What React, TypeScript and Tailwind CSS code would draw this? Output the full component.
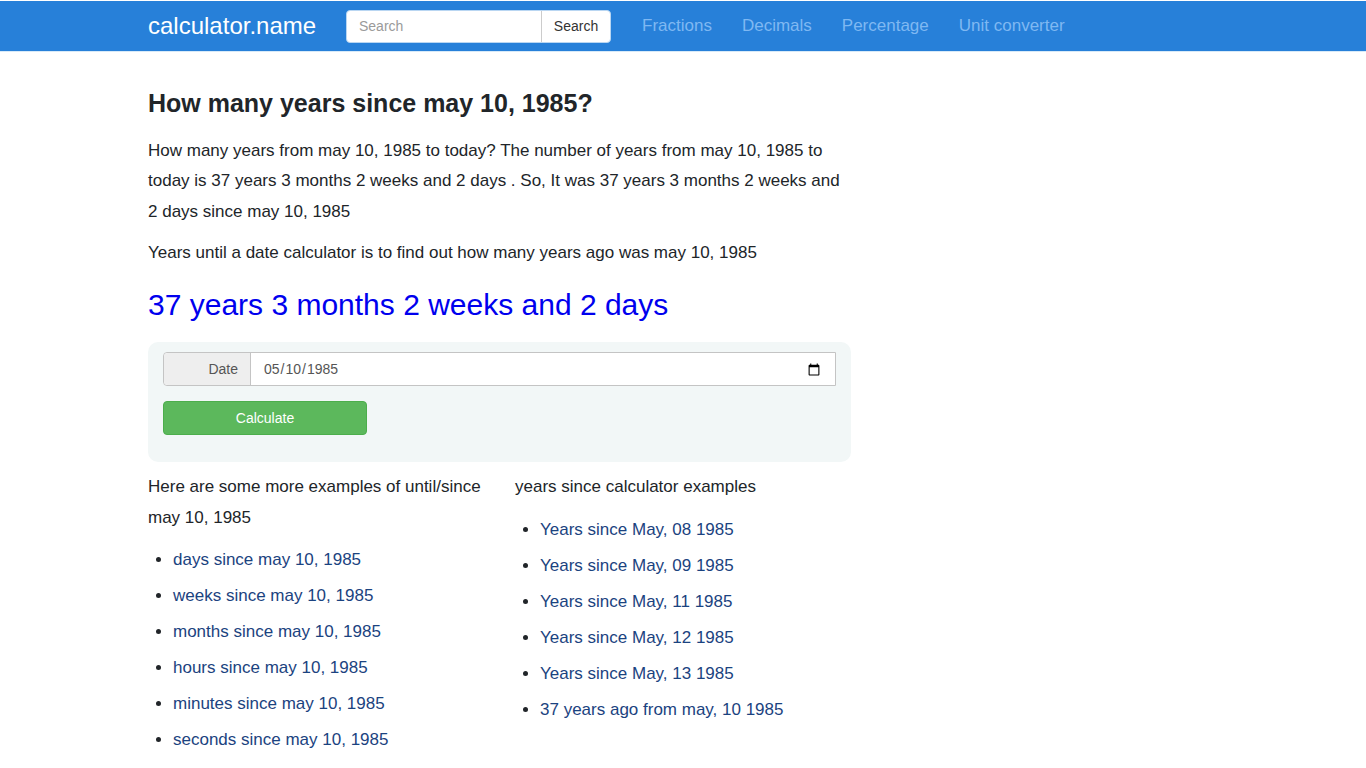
export default function App() {
  const left = ["days since may 10, 1985", "weeks since may 10, 1985", "months since may 10, 1985", "hours since may 10, 1985", "minutes since may 10, 1985", "seconds since may 10, 1985"];
  const right = ["Years since May, 08 1985", "Years since May, 09 1985", "Years since May, 11 1985", "Years since May, 12 1985", "Years since May, 13 1985", "37 years ago from may, 10 1985"];
  const List = ({ items }: { items: string[] }) => (
    <ul className="list-disc pl-[25px] mt-[11.6px]">
      {items.map((t) => (
        <li key={t} className="h-[36px] leading-[30px] marker:text-[#212529]">
          <a href="#" className="text-[#1b4380]">{t}</a>
        </li>
      ))}
    </ul>
  );
  return (
    <div className="font-['Liberation_Sans',Arial,sans-serif] text-[17px] text-[#212529] bg-white h-[768px] overflow-hidden pt-px">
      <nav className="h-[50px] bg-[#2780d9] pl-[148px] flex items-center border-b border-[#d8eaf8] box-content -mb-px">
        <a href="#" className="text-white text-[24px] leading-none w-[198px]">calculator.name</a>
        <div className="flex w-[265px] h-[33px] bg-white rounded-[4px] overflow-hidden border border-[#b9d6f2]">
          <input placeholder="Search" className="w-[194px] h-full pl-[12px] text-[14px] outline-none placeholder:text-[#9a9a9a]" />
          <button className="flex-1 border-l border-[#ccc] text-[14px] text-[#333]">Search</button>
        </div>
        <div className="flex gap-[30px] ml-[31px] text-[#7fb8f2] text-[17px]">
          <a href="#">Fractions</a>
          <a href="#">Decimals</a>
          <a href="#">Percentage</a>
          <a href="#">Unit converter</a>
        </div>
      </nav>
      <main className="ml-[148px] w-[703px]">
        <h1 className="text-[25px] font-bold leading-[30px] mt-[37px]">How many years since may 10, 1985?</h1>
        <p className="leading-[30.6px] mt-[17.6px]">How many years from may 10, 1985 to today? The number of years from may 10, 1985 to today is 37 years 3 months 2 weeks and 2 days . So, It was 37 years 3 months 2 weeks and 2 days since may 10, 1985</p>
        <p className="leading-[30.6px] mt-[10.4px]">Years until a date calculator is to find out how many years ago was may 10, 1985</p>
        <h2 className="text-[30px] leading-[36px] text-[#0000ee] mt-[19px]">37 years 3 months 2 weeks and 2 days</h2>
        <div className="mt-[19px] h-[120px] bg-[#f2f7f7] rounded-[10px] px-[15px] pt-[10px]">
          <div className="flex h-[34px] border border-[#c4c4c4] rounded-l-[4px] bg-white">
            <label className="w-[87px] bg-[#eeeeee] border-r border-[#c4c4c4] text-right pr-[12px] text-[14px] text-[#555] leading-[32px] rounded-l-[4px]">Date</label>
            <input type="date" defaultValue="1985-05-10" className="flex-1 pl-[12px] pr-[12px] pt-px text-[14px] text-[#555] outline-none" />
          </div>
          <button className="block mt-[15px] w-[204px] h-[34px] pt-px bg-[#5cb85c] border border-[#4cae4c] rounded-[4px] text-white text-[14px]">Calculate</button>
        </div>
        <div className="flex mt-[10px]">
          <div className="w-[367px] pr-[31px]">
            <p className="leading-[30.6px]">Here are some more examples of until/since may 10, 1985</p>
            <List items={left} />
          </div>
          <div className="flex-1">
            <p className="leading-[30.6px]">years since calculator examples</p>
            <List items={right} />
          </div>
        </div>
      </main>
    </div>
  );
}
